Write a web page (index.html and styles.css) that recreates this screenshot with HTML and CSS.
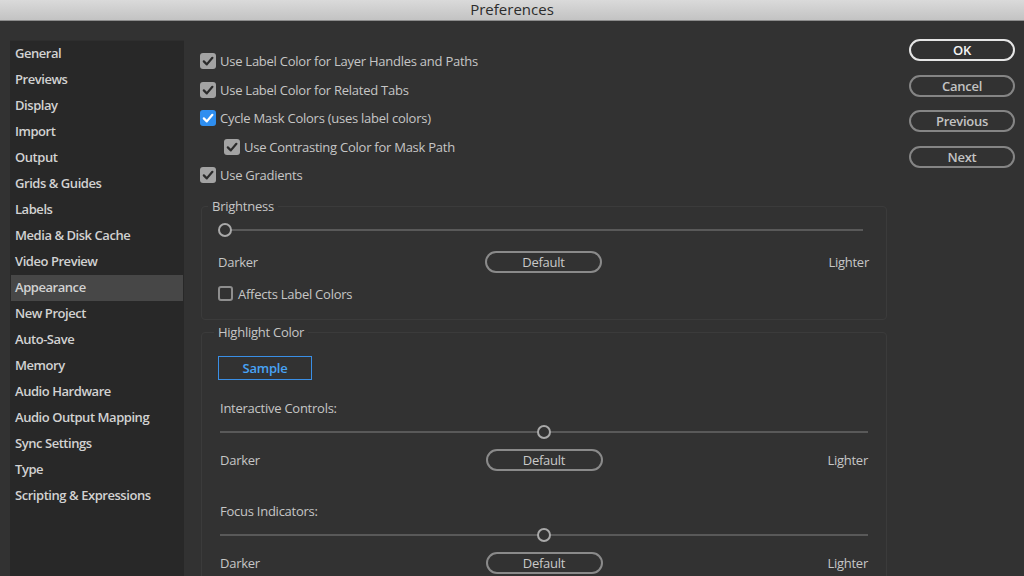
FILE: index.html
```html
<!DOCTYPE html>
<html lang="en">
<head>
    <meta charset="UTF-8">
    <title>Preferences</title>
    <link rel="stylesheet" href="styles.css">
</head>
<body>
    <div class="titlebar">Preferences</div>
    <div class="window">
        <ul class="sidebar">
            <li>General</li>
            <li>Previews</li>
            <li>Display</li>
            <li>Import</li>
            <li>Output</li>
            <li>Grids &amp; Guides</li>
            <li>Labels</li>
            <li>Media &amp; Disk Cache</li>
            <li>Video Preview</li>
            <li class="selected">Appearance</li>
            <li>New Project</li>
            <li>Auto-Save</li>
            <li>Memory</li>
            <li>Audio Hardware</li>
            <li>Audio Output Mapping</li>
            <li>Sync Settings</li>
            <li>Type</li>
            <li>Scripting &amp; Expressions</li>
        </ul>

        <div class="content">
            <div class="checks">
                <label class="check-row"><span class="box checked"><svg viewBox="0 0 16 16"><path d="M3.8 8.4 L6.8 11.4 L12.4 4.8"/></svg></span>Use Label Color for Layer Handles and Paths</label>
                <label class="check-row"><span class="box checked"><svg viewBox="0 0 16 16"><path d="M3.8 8.4 L6.8 11.4 L12.4 4.8"/></svg></span>Use Label Color for Related Tabs</label>
                <label class="check-row"><span class="box checked blue"><svg viewBox="0 0 16 16"><path d="M3.8 8.4 L6.8 11.4 L12.4 4.8"/></svg></span>Cycle Mask Colors (uses label colors)</label>
                <label class="check-row indent"><span class="box checked"><svg viewBox="0 0 16 16"><path d="M3.8 8.4 L6.8 11.4 L12.4 4.8"/></svg></span>Use Contrasting Color for Mask Path</label>
                <label class="check-row"><span class="box checked"><svg viewBox="0 0 16 16"><path d="M3.8 8.4 L6.8 11.4 L12.4 4.8"/></svg></span>Use Gradients</label>
            </div>

            <div class="group brightness">
                <div class="group-title">Brightness</div>
                <div class="slider-row">
                    <div class="slider short">
                        <div class="track"></div>
                        <div class="knob" style="--v: 0%"></div>
                    </div>
                </div>
                <div class="range-row">
                    <span>Darker</span>
                    <button class="pill">Default</button>
                    <span class="right">Lighter</span>
                </div>
                <label class="check-row small"><span class="box"></span>Affects Label Colors</label>
            </div>

            <div class="group highlight">
                <div class="group-title">Highlight Color</div>
                <button class="sample">Sample</button>

                <div class="field-label">Interactive Controls:</div>
                <div class="slider">
                    <div class="track"></div>
                    <div class="knob" style="--v: 50%"></div>
                </div>
                <div class="range-row">
                    <span>Darker</span>
                    <button class="pill">Default</button>
                    <span class="right">Lighter</span>
                </div>

                <div class="field-label spaced">Focus Indicators:</div>
                <div class="slider">
                    <div class="track"></div>
                    <div class="knob" style="--v: 50%"></div>
                </div>
                <div class="range-row">
                    <span>Darker</span>
                    <button class="pill">Default</button>
                    <span class="right">Lighter</span>
                </div>
            </div>
        </div>

        <div class="actions">
            <button class="action primary">OK</button>
            <button class="action">Cancel</button>
            <button class="action">Previous</button>
            <button class="action">Next</button>
        </div>
    </div>
</body>
</html>
```

FILE: styles.css
```css
/* Base */
html, body {
    margin: 0;
    height: 576px;
    overflow: hidden;
}

body {
    background-color: #323232;
    color: #c6c6c6;
    font-family: "Open Sans", "Noto Sans", sans-serif;
    font-size: 13px;
    letter-spacing: -0.25px;
}

button {
    font-family: inherit;
    font-size: 13px;
    letter-spacing: inherit;
    background: transparent;
    cursor: pointer;
    padding: 0;
}

/* Title bar */
.titlebar {
    height: 20px;
    line-height: 18px;
    text-align: center;
    font-size: 15px;
    letter-spacing: 0;
    color: #2c2c2c;
    background: linear-gradient(to bottom, #dadada, #c3c3c3);
    border-bottom: 1px solid #8c8c8c;
}

.window {
    display: flex;
    align-items: flex-start;
}

/* Category list */
.sidebar {
    list-style: none;
    margin: 19px 0 0 10px;
    padding: 0 1px;
    width: 172px;
    height: 540px;
    background-color: #282828;
    border-top: 1px solid #2e2e2e;
}

.sidebar li {
    height: 26px;
    line-height: 24px;
    padding-left: 4px;
    font-weight: 600;
    letter-spacing: -0.45px;
    color: #d2d2d2;
}

.sidebar li.selected {
    background-color: #474747;
}

/* Main panel */
.content {
    width: 687px;
    margin-left: 16px;
    padding-top: 26px;
}

.check-row {
    display: flex;
    align-items: center;
    gap: 4px;
    height: 28.5px;
}

.check-row.indent {
    padding-left: 24px;
}

.box {
    width: 16px;
    height: 16px;
    box-sizing: border-box;
    border-radius: 3px;
    display: inline-flex;
}

.box.checked {
    background-color: #a3a3a3;
}

.box.checked.blue {
    background-color: #2e8ef0;
}

.box svg {
    width: 16px;
    height: 16px;
    fill: none;
    stroke: #2b2b2b;
    stroke-width: 2.2;
    stroke-linecap: round;
    stroke-linejoin: round;
}

.box.blue svg {
    stroke: #ffffff;
}

.box:not(.checked) {
    border: 2px solid #8e8e8e;
    width: 15px;
    height: 15px;
}

/* Groups */
.group {
    border: 1px solid #3b3b3b;
    border-radius: 4px;
    margin-left: 1px;
}

.group-title {
    margin-top: -9px;
    height: 16px;
    line-height: 16px;
    padding: 0 4px;
    width: fit-content;
    background-color: #323232;
}

.brightness {
    margin-top: 16px;
    padding: 0 17px 9px 16px;
}

.brightness .group-title {
    margin-left: -10px;
}

.brightness .slider-row,
.brightness .range-row,
.brightness .check-row {
    height: 32px;
}

.brightness .check-row {
    gap: 5px;
}

.brightness .slider {
    margin-left: 1px;
}

.highlight {
    margin-top: 12px;
    padding: 0 18px 0 18px;
    height: 260px;
}

.highlight .group-title {
    margin-left: -6px;
}

.sample {
    margin-top: 16px;
    margin-left: -2px;
    width: 94px;
    height: 24px;
    border: 1px solid #3a8fe6;
    color: #48a3f5;
    font-weight: 600;
}

.field-label {
    margin-top: 16px;
    height: 24px;
    line-height: 24px;
}

.field-label.spaced {
    margin-top: 23px;
}

/* Sliders */
.slider-row {
    display: flex;
    align-items: center;
}

.slider {
    position: relative;
    height: 24px;
    flex: 1;
}

.slider.short {
    margin-right: 6px;
}

.track {
    position: absolute;
    left: 0;
    right: 0;
    top: 11px;
    height: 2px;
    background-color: #595959;
}

.knob {
    position: absolute;
    top: 5px;
    left: calc(var(--v) - 7px);
    width: 10px;
    height: 10px;
    border: 2px solid #a9a9a9;
    border-radius: 50%;
    background-color: #323232;
}

.brightness .knob {
    left: -1px;
}

.range-row {
    display: grid;
    grid-template-columns: 1fr 117px 1fr;
    align-items: center;
    height: 32px;
}

.range-row .right {
    justify-self: end;
}

.pill {
    height: 22px;
    border: 2px solid #8a8a8a;
    border-radius: 11px;
    color: #c9c9c9;
}

/* Dialog buttons */
.actions {
    display: flex;
    flex-direction: column;
    gap: 13.5px;
    margin: 18px 0 0 22px;
}

.action {
    width: 106px;
    height: 22px;
    border: 2px solid #858585;
    border-radius: 11px;
    color: #c3c3c3;
    font-weight: 600;
}

.action.primary {
    border-color: #e6e6e6;
    color: #f4f4f4;
}
```
